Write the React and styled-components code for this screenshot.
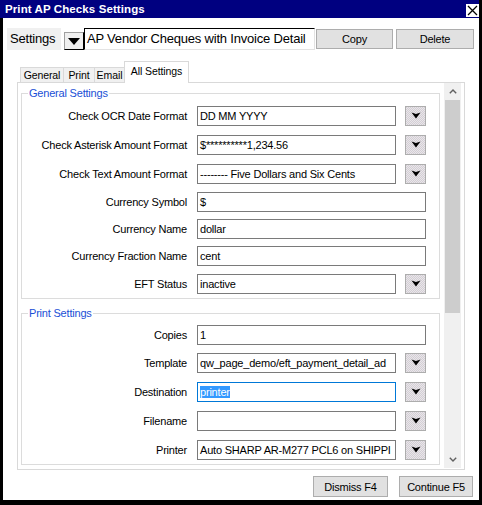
import styled, { createGlobalStyle } from 'styled-components';

const SANS = '"Liberation Sans", Arial, sans-serif';

const GlobalStyle = createGlobalStyle`
  html, body {
    margin: 0;
    padding: 0;
    background: #fff;
  }

  body {
    font-family: ${SANS};
    color: #000;
  }

  * {
    box-sizing: border-box;
  }
`;

const Frame = styled.div`
  width: 482px;
  height: 505px;
  background: #000;
  display: flex;
  flex-direction: column;
  padding: 0 3px 5px 0;
`;

const TitleBar = styled.div`
  height: 18px;
  background: #000080;
  display: flex;
  justify-content: space-between;
  padding-left: 5px;
`;

const Title = styled.span`
  font-weight: bold;
  font-size: 11.5px;
  line-height: 18px;
  color: #fff;
  letter-spacing: 0.1px;
`;

const CloseBox = styled.div`
  width: 13px;
  height: 13px;
  margin-top: 4px;
  background: #fff;
  display: flex;
  align-items: center;
  justify-content: center;
`;

const Body = styled.div`
  flex: 1;
  margin-left: 3px;
  background: #fff;
  display: flex;
  flex-direction: column;
`;

const TopRow = styled.div`
  margin-top: 10px;
  height: 22px;
  display: flex;
  align-items: center;
  padding: 0 5px 0 4px;
`;

const SettingsLabel = styled.div`
  width: 54px;
  height: 22px;
  background: #f0f0f0;
  padding-left: 3px;
  font-size: 13px;
  letter-spacing: -0.2px;
  line-height: 22px;
`;

const ComboButton = styled.div`
  width: 20px;
  height: 18px;
  margin-left: 3px;
  align-self: flex-end;
  background: #f0f0f0;
  border: 1px solid #000;
  border-top-color: #a0a0a0;
  border-left-color: #a0a0a0;
  display: flex;
  align-items: center;
  justify-content: center;
`;

const NameField = styled.div`
  width: 231px;
  height: 22px;
  border-top: 1px solid #000;
  border-left: 1px solid #000;
  border-right: 1px solid #e3e3e3;
  border-bottom: 1px solid #e3e3e3;
  padding-left: 2px;
  font-size: 13px;
  letter-spacing: -0.2px;
  line-height: 20px;
  white-space: nowrap;
  overflow: hidden;
`;

const PushButton = styled.div`
  width: ${(p) => p.$w}px;
  height: ${(p) => p.$h}px;
  margin-left: ${(p) => p.$gap}px;
  background: #e1e1e1;
  border: 1px solid #adadad;
  font-size: 11px;
  letter-spacing: -0.2px;
  display: flex;
  align-items: center;
  justify-content: center;
`;

const TabStrip = styled.div`
  margin: 11px 0 0 17px;
  height: 21px;
  display: flex;
  align-items: flex-end;
  position: relative;
  z-index: 1;
`;

const Tab = styled.div`
  width: ${(p) => p.$w}px;
  height: ${(p) => (p.$active ? 22 : 15)}px;
  margin-bottom: ${(p) => (p.$active ? -1 : 0)}px;
  margin-left: ${(p) => (p.$first ? 0 : -1)}px;
  background: ${(p) => (p.$active ? '#fff' : '#f0f0f0')};
  border: 1px solid #d9d9d9;
  border-bottom: none;
  font-size: 10.5px;
  letter-spacing: -0.1px;
  text-align: center;
  line-height: ${(p) => (p.$active ? 19 : 14)}px;
  white-space: nowrap;
`;

const Panel = styled.div`
  margin: 0 14px;
  height: 388px;
  border: 1px solid #d9d9d9;
  display: flex;
`;

const ScrollView = styled.div`
  flex: 1;
  overflow: hidden;
  padding: 0 4px 0 3px;
`;

const Group = styled.fieldset`
  margin: ${(p) => (p.$first ? 2 : 6)}px 0 0;
  padding: 0;
  border: 1px solid #dcdcdc;
  min-width: 0;
`;

const Legend = styled.legend`
  margin-left: 6px;
  padding: 0 1px;
  font-size: 11px;
  letter-spacing: -0.2px;
  line-height: 16px;
  color: #1a4fd6;
`;

const Row = styled.div`
  display: grid;
  grid-template-columns: 165px 229px;
  column-gap: 10px;
  align-items: center;
  height: ${(p) => (p.$tall ? 29 : 27)}px;
`;

const Label = styled.div`
  text-align: right;
  font-size: 11px;
  letter-spacing: -0.2px;
  white-space: nowrap;
`;

const FieldWrap = styled.div`
  display: flex;
  gap: 9px;
`;

const Field = styled.div`
  flex: 1;
  height: 20px;
  border: 1px solid ${(p) => (p.$focus ? '#0078d7' : '#7a7a7a')};
  background: #fff;
  padding: 0 2px;
  font-size: 11px;
  letter-spacing: -0.2px;
  line-height: 18px;
  white-space: nowrap;
  overflow: hidden;
`;

const Selected = styled.span`
  background: #3399ff;
  color: #fff;
`;

const DropButton = styled.div`
  width: 21px;
  height: 20px;
  border: 1px solid #adadad;
  background: repeating-conic-gradient(#e8e8e8 0 25%, #d4ccd6 0 50%) 0 0 / 2px 2px;
  display: flex;
  align-items: center;
  justify-content: center;
`;

const ScrollBar = styled.div`
  width: 17px;
  margin: 0 3px 1px 0;
  background: #f0f0f0;
  display: flex;
  flex-direction: column;
`;

const ScrollArrow = styled.div`
  height: 17px;
  display: flex;
  align-items: center;
  justify-content: center;
`;

const Track = styled.div`
  flex: 1;
  padding: 0 1px;
`;

const Thumb = styled.div`
  height: 213px;
  background: #cdcdcd;
`;

const Footer = styled.div`
  margin-top: 6px;
  height: 21px;
  display: flex;
  justify-content: flex-end;
  padding-right: 6px;
`;

const Arrow = () => (
  <svg width="10" height="7" viewBox="0 0 10 7">
    <polygon points="0.5,0.5 5,2 9.5,0.5 5,6.5" fill="#000" />
  </svg>
);

const Chevron = ({ up }) => (
  <svg width="8" height="5" viewBox="0 0 8 5">
    <polyline
      points={up ? '0.8,4.2 4,1 7.2,4.2' : '0.8,0.8 4,4 7.2,0.8'}
      fill="none"
      stroke="#606060"
      strokeWidth="1.4"
    />
  </svg>
);

const generalRows = [
  { label: 'Check OCR Date Format', value: 'DD MM YYYY', drop: true },
  { label: 'Check Asterisk Amount Format', value: '$**********1,234.56', drop: true },
  { label: 'Check Text Amount Format', value: '-------- Five Dollars and Six Cents', drop: true },
  { label: 'Currency Symbol', value: '$' },
  { label: 'Currency Name', value: 'dollar' },
  { label: 'Currency Fraction Name', value: 'cent' },
  { label: 'EFT Status', value: 'inactive', drop: true },
];

const printRows = [
  { label: 'Copies', value: '1' },
  { label: 'Template', value: 'qw_page_demo/eft_payment_detail_ad', drop: true },
  { label: 'Destination', value: 'printer', drop: true, focus: true },
  { label: 'Filename', value: '', drop: true },
  { label: 'Printer', value: 'Auto SHARP AR-M277 PCL6 on SHIPPI', drop: true },
];

function SettingRow({ row }) {
  return (
    <Row $tall={row.drop}>
      <Label>{row.label}</Label>
      <FieldWrap>
        <Field $focus={row.focus}>
          {row.focus ? <Selected>{row.value}</Selected> : row.value}
        </Field>
        {row.drop && (
          <DropButton>
            <Arrow />
          </DropButton>
        )}
      </FieldWrap>
    </Row>
  );
}

function SettingGroup({ title, rows, first }) {
  return (
    <Group $first={first}>
      <Legend>{title}</Legend>
      {rows.map((row) => (
        <SettingRow key={row.label} row={row} />
      ))}
    </Group>
  );
}

export default function App() {
  return (
    <>
      <GlobalStyle />
      <Frame>
        <TitleBar>
          <Title>Print AP Checks Settings</Title>
          <CloseBox>
            <svg width="11" height="11" viewBox="0 0 11 11">
              <path d="M1 1L10 10M10 1L1 10" stroke="#000" strokeWidth="1.3" />
            </svg>
          </CloseBox>
        </TitleBar>
        <Body>
          <TopRow>
            <SettingsLabel>Settings</SettingsLabel>
            <ComboButton>
              <svg width="12" height="7" viewBox="0 0 12 7">
                <path d="M0 0H12L6 7Z" fill="#000" />
              </svg>
            </ComboButton>
            <NameField>AP Vendor Cheques with Invoice Detail</NameField>
            <PushButton $w={77} $h={20} $gap={1}>Copy</PushButton>
            <PushButton $w={78} $h={20} $gap={3}>Delete</PushButton>
          </TopRow>

          <TabStrip>
            <Tab $first $w={44}>General</Tab>
            <Tab $w={32}>Print</Tab>
            <Tab $w={31}>Email</Tab>
            <Tab $active $w={65}>All Settings</Tab>
          </TabStrip>

          <Panel>
            <ScrollView>
              <SettingGroup first title="General Settings" rows={generalRows} />
              <SettingGroup title="Print Settings" rows={printRows} />
            </ScrollView>
            <ScrollBar>
              <ScrollArrow>
                <Chevron up />
              </ScrollArrow>
              <Track>
                <Thumb />
              </Track>
              <ScrollArrow>
                <Chevron />
              </ScrollArrow>
            </ScrollBar>
          </Panel>

          <Footer>
            <PushButton $w={75} $h={21} $gap={0}>Dismiss F4</PushButton>
            <PushButton $w={74} $h={21} $gap={11}>Continue F5</PushButton>
          </Footer>
        </Body>
      </Frame>
    </>
  );
}
